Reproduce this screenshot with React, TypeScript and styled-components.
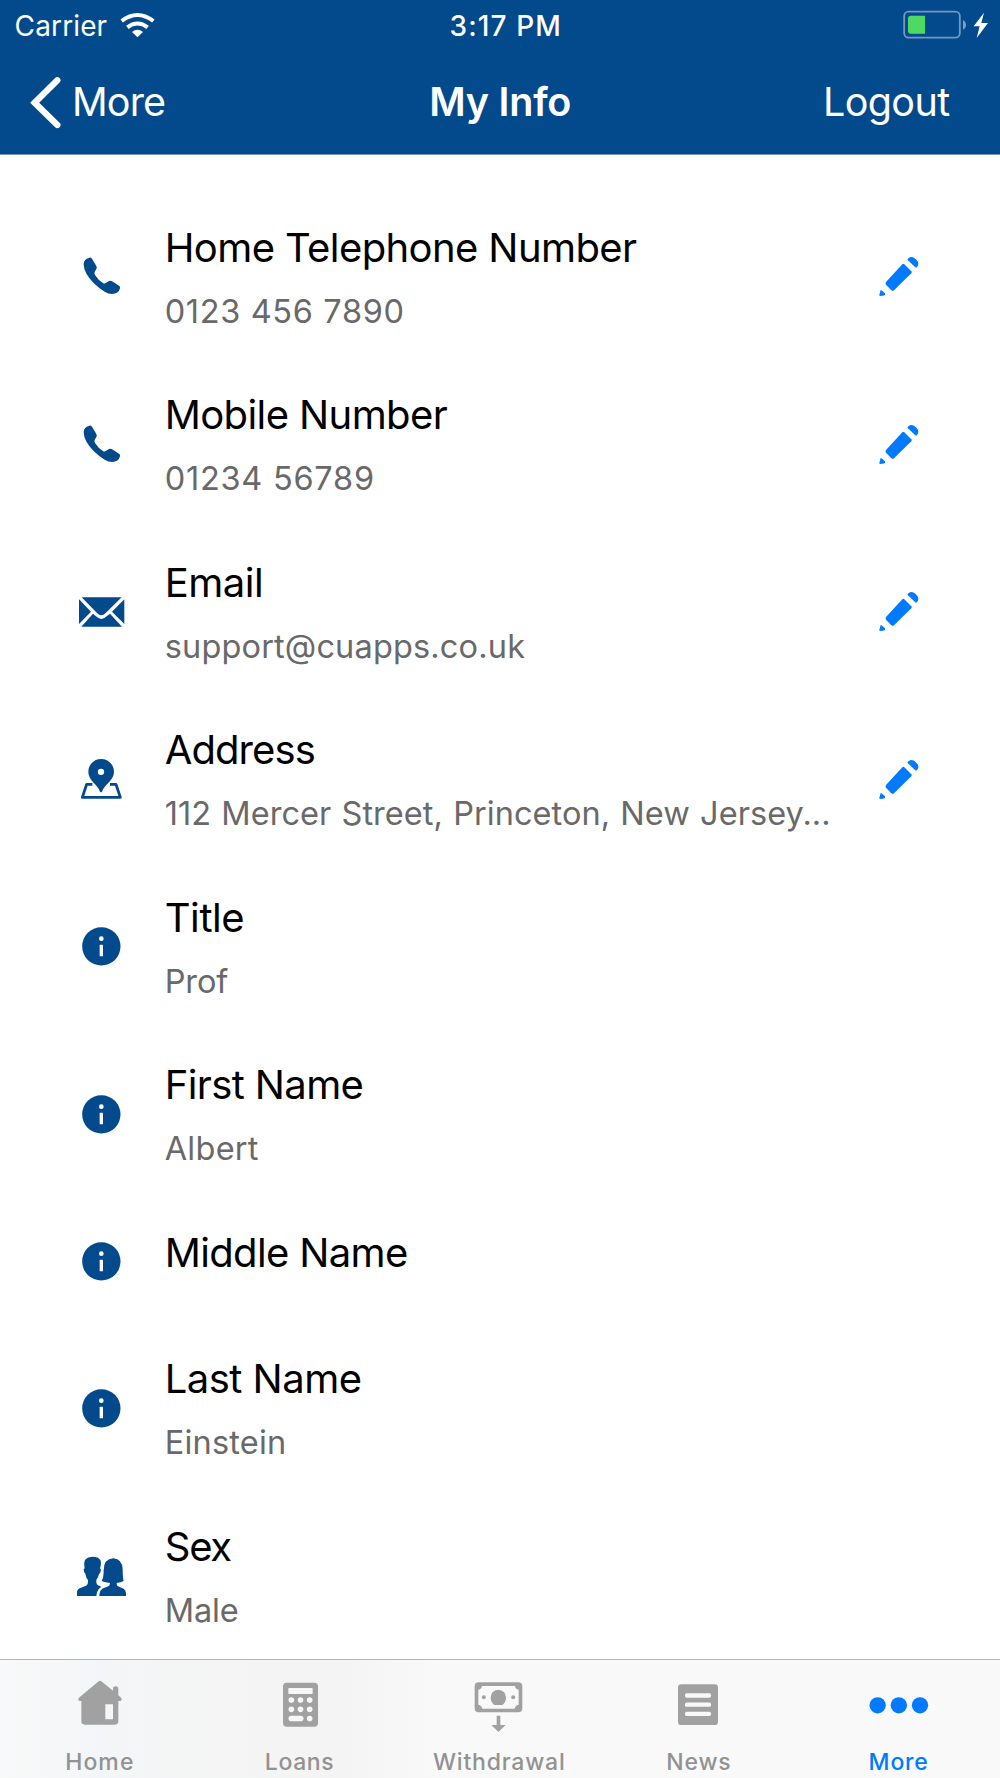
import React from 'react';
import styled, { createGlobalStyle } from 'styled-components';

const NAVY = '#034a8c';
const BLUE = '#007aff';
const GREY = '#a1a1a1';

const GlobalStyle = createGlobalStyle`
  * { box-sizing: border-box; }
  body { margin: 0; background: #fff; }
`;

const Screen = styled.div`
  width: 1000px;
  height: 1778px;
  display: flex;
  flex-direction: column;
  overflow: hidden;
  background: #fff;
  color: #000;
  font-family: Inter, "Liberation Sans", sans-serif;
`;

const Header = styled.header`
  flex: none;
  height: 155px;
  background: ${NAVY};
  border-bottom: 1px solid #7897bc;
  color: #fff;
`;

const StatusBar = styled.div`
  display: grid;
  grid-template-columns: 1fr auto 1fr;
  align-items: center;
  height: 51px;
  padding: 0 10px 0 14.6px;
  font-size: 28px;
  line-height: 42px;
`;

const Side = styled.div<{ $end?: boolean; $gap?: number }>`
  display: flex;
  align-items: center;
  justify-content: ${(p) => (p.$end ? 'flex-end' : 'flex-start')};
  gap: ${(p) => p.$gap ?? 0}px;
`;

const Label = styled.span<{ $tracking?: number }>`
  letter-spacing: ${(p) => p.$tracking ?? 0}px;
  white-space: nowrap;
`;

const Clock = styled.time`
  font-weight: 550;
  letter-spacing: 1.1px;
  padding-top: 1px;
  padding-left: 7px;
`;

const Carrier = styled(Label)`
  padding-top: 1px;
`;

const NavBar = styled.nav`
  display: grid;
  grid-template-columns: 1fr auto 1fr;
  align-items: center;
  height: 103px;
  padding: 0 50.5px 0 28px;
  font-size: 39.5px;
  line-height: 49px;
`;

const NavTitle = styled.h1`
  margin: 0;
  padding-left: 23px;
  font-size: inherit;
  font-weight: 600;
  letter-spacing: -0.25px;
`;

const List = styled.main`
  flex: 1;
  min-height: 0;
  padding-top: 37.5px;
  overflow: hidden;
`;

const Row = styled.section<{ $short: boolean }>`
  display: grid;
  grid-template-columns: 60px 676px 60px;
  align-items: center;
  height: ${(p) => (p.$short ? 126.5 : 167.5)}px;
  padding-left: 71.5px;
  column-gap: 33.2px;
`;

const RowText = styled.div`
  align-self: start;
  padding-top: 31.2px;
  min-width: 0;
`;

const RowTitle = styled.div<{ $tracking: number }>`
  font-size: 40px;
  line-height: 48px;
  letter-spacing: ${(p) => p.$tracking}px;
  white-space: nowrap;
`;

const RowValue = styled.div<{ $tracking: number; $wordGap: number }>`
  margin-top: 20.2px;
  color: #696969;
  font-size: 32.5px;
  line-height: 40px;
  letter-spacing: ${(p) => p.$tracking}px;
  word-spacing: ${(p) => p.$wordGap}px;
  white-space: nowrap;
`;

const EditSlot = styled.button`
  display: flex;
  width: 60px;
  height: 60px;
  margin-left: -4.6px;
  padding: 0;
  border: 0;
  background: none;
`;

const Glyph = styled.svg`
  display: block;
  flex: none;
`;

const TabBar = styled.footer`
  flex: none;
  display: grid;
  grid-template-columns: repeat(5, 1fr);
  height: 119px;
  padding-right: 1.5px;
  border-top: 1px solid #b5b5b6;
  background: linear-gradient(90deg, #f8f9f9 0, #f3f6f8 100px, #f4f5f5 180px, #f4f4f4 340px, #f9f9f9 440px);
`;

const Tab = styled.div<{ $active?: boolean; $tracking: number }>`
  display: flex;
  flex-direction: column;
  align-items: center;
  padding-top: 10px;
  color: ${(p) => (p.$active ? BLUE : '#929292')};
  font-size: 23px;
  font-weight: 500;
  line-height: 28px;
  letter-spacing: ${(p) => p.$tracking}px;
`;

const TabLabel = styled.span`
  margin-top: 14px;
`;

function PhoneIcon() {
  return (
    <Glyph width="60" height="60" viewBox="36 108 180 180" fill={NAVY}>
      <path d="M88 143Q93 141 96 146L109 168Q112 173 109 177L104 186Q102 190 105 195Q114 210 130 220Q133 222 137 219L147 213Q151 211 155 213L177 227Q182 230 180 235Q176 252 156 252Q136 252 104 222Q71 190 71 163Q71 147 88 143Z" />
    </Glyph>
  );
}

function MailIcon() {
  return (
    <Glyph width="60" height="60" viewBox="36 63 180 180" fill={NAVY}>
      <path d="M65 112H185L137 159Q124 173 111 159Z" />
      <path d="M57 118L93 155L57 192Z" />
      <path d="M193 118L156 155L193 192Z" />
      <path d="M64 200L99 161L108 169Q124 185 140 169L150 161L186 200Z" />
    </Glyph>
  );
}

function PinIcon() {
  return (
    <Glyph width="60" height="60" viewBox="36 565 180 180" fill={NAVY}>
      <path fillRule="evenodd" d="M123 595C145 595 162 612 162 633C162 656 141 667 130 684L126 693Q123 697 120 693L116 684C105 667 85 656 85 633C85 612 102 595 123 595ZM123 624A9.5 9.5 0 1 0 123 643A9.5 9.5 0 1 0 123 624Z" />
      <path d="M97 671H80L67 710H181L168 671H150" fill="none" stroke={NAVY} strokeWidth="8.5" strokeLinejoin="round" />
    </Glyph>
  );
}

function InfoIcon() {
  return (
    <Glyph width="60" height="60" viewBox="36 48.5 180 180">
      <circle cx="124" cy="139.5" r="57.5" fill={NAVY} />
      <circle cx="124" cy="116.5" r="7" fill="#fff" />
      <rect x="119" y="135" width="10" height="34" rx="1.5" fill="#fff" />
    </Glyph>
  );
}

function PeopleIcon() {
  return (
    <Glyph width="60" height="60" viewBox="36 75 180 180" fill={NAVY}>
      <path d="M51 228V215Q52 208 59 205L78 197Q84 194 84 187V180Q78 174 76 161Q71 158 71 148Q72 146 74 145Q70 125 77 118Q83 111 97 110Q116 110 121 120Q125 128 120 145Q124 147 122 154Q121 160 117 162Q115 173 109 180V187Q109 193 114 196L124 200Q113 207 111 217L109 228Z" />
      <path d="M118 228Q118 214 124 209Q128 205 145 199Q150 196 150 189Q135 188 125 183Q131 173 131 151Q131 117 160 115Q187 117 188 148Q188 174 191 183Q182 188 170 189Q169 196 174 199L191 206Q197 210 198 220V228Z" />
    </Glyph>
  );
}

function PencilIcon() {
  return (
    <Glyph width="60" height="60" viewBox="26 19 180 180" fill={BLUE}>
      <path d="M142 61Q141 58 145 55Q149 52 154 52Q161 53 168 60Q175 67 174 73Q174 78 170 82Q167 85 164 82Z" />
      <path d="M126 74Q129 71 132 74L153 95Q156 98 153 101L101 152Q97 155 93 152L77 135Q74 131 77 127Z" />
      <path d="M61 151Q64 151 73 160Q75 163 74 166Q73 168 60 169Q56 169 57 165Z" />
    </Glyph>
  );
}

const icons = {
  phone: PhoneIcon,
  mail: MailIcon,
  pin: PinIcon,
  info: InfoIcon,
  people: PeopleIcon,
};

interface Field {
  icon: keyof typeof icons;
  title: string;
  titleTracking: number;
  value?: string;
  valueTracking?: number;
  valueWordGap?: number;
  editable?: boolean;
}

const fields: Field[] = [
  { icon: 'phone', title: 'Home Telephone Number', titleTracking: -0.6, value: '0123 456 7890', valueTracking: 0.65, editable: true },
  { icon: 'phone', title: 'Mobile Number', titleTracking: -0.6, value: '01234 56789', valueTracking: 0.75, editable: true },
  { icon: 'mail', title: 'Email', titleTracking: -0.5, value: 'support@cuapps.co.uk', valueTracking: 0.16, editable: true },
  { icon: 'pin', title: 'Address', titleTracking: -0.9, value: '112 Mercer Street, Princeton, New Jersey...', valueTracking: 0.05, valueWordGap: 1, editable: true },
  { icon: 'info', title: 'Title', titleTracking: -0.4, value: 'Prof', valueTracking: -0.1 },
  { icon: 'info', title: 'First Name', titleTracking: -0.62, value: 'Albert', valueTracking: 0.25 },
  { icon: 'info', title: 'Middle Name', titleTracking: -0.65 },
  { icon: 'info', title: 'Last Name', titleTracking: -0.52, value: 'Einstein', valueTracking: 0.2 },
  { icon: 'people', title: 'Sex', titleTracking: -1.2, value: 'Male', valueTracking: -0.17 },
];

function FieldRow({ field }: { field: Field }) {
  const Icon = icons[field.icon];
  return (
    <Row $short={!field.value}>
      <Icon />
      <RowText>
        <RowTitle $tracking={field.titleTracking}>{field.title}</RowTitle>
        {field.value && (
          <RowValue $tracking={field.valueTracking ?? 0} $wordGap={field.valueWordGap ?? 0}>
            {field.value}
          </RowValue>
        )}
      </RowText>
      {field.editable && (
        <EditSlot>
          <PencilIcon />
        </EditSlot>
      )}
    </Row>
  );
}

export default function App() {
  return (
    <Screen>
      <GlobalStyle />
      <Header>
        <StatusBar>
          <Side $gap={11}>
            <Carrier $tracking={0.13}>Carrier</Carrier>
            <Glyph width="40" height="40" viewBox="355 15 120 120" fill="none" stroke="#fff">
              <path d="M366 60Q413 24 461 60" strokeWidth="12" />
              <path d="M383 79Q413 56 444 79" strokeWidth="12" />
              <path d="M397 93Q413 80 430 93L413.5 109Z" fill="#fff" stroke="none" />
            </Glyph>
          </Side>
          <Clock>3:17 PM</Clock>
          <Side $end>
            <Glyph width="90" height="40" viewBox="360 16 270 120">
              <rect x="372.5" y="33" width="167" height="78" rx="13" fill="none" stroke="#7596bd" strokeWidth="5.5" />
              <path d="M392 45H435V99H392Q384 99 384 91V53Q384 45 392 45Z" fill="#4cd964" />
              <path d="M549 58Q558 63 558 72Q558 82 549 87Z" fill="#7f9fc3" />
              <path d="M612 36L581 77H599L590 112L624 67H604Z" fill="#fff" />
            </Glyph>
          </Side>
        </StatusBar>
        <NavBar>
          <Side $gap={8}>
            <Glyph width="36" height="60" viewBox="84 217 108 180">
              <path d="M172 239L104 306L172 373" fill="none" stroke="#fff" strokeWidth="19" strokeLinecap="round" strokeLinejoin="miter" />
            </Glyph>
            <Label $tracking={-0.87}>More</Label>
          </Side>
          <NavTitle>My Info</NavTitle>
          <Side $end>
            <Label $tracking={-0.6}>Logout</Label>
          </Side>
        </NavBar>
      </Header>

      <List>
        {fields.map((field) => (
          <FieldRow key={field.title} field={field} />
        ))}
      </List>

      <TabBar>
        <Tab $tracking={1.1}>
          <Glyph width="80" height="64" viewBox="180 60 240 192" fill={GREY}>
            <path fillRule="evenodd" d="M296 94Q300 91 304 94L339 122V114Q340 109 347 109Q354 109 355 114V136L364 144Q368 149 362 153H355V214Q355 224 345 224H254Q244 224 244 214V153H238Q232 149 236 144ZM316 163V208H339V163Z" />
          </Glyph>
          <TabLabel>Home</TabLabel>
        </Tab>
        <Tab $tracking={0.6}>
          <Glyph width="80" height="64" viewBox="780 60 240 192" fill={GREY}>
            <rect x="849" y="98" width="105" height="132" rx="11" />
            <g fill="#f7f7f7">
              <rect x="865" y="114" width="73" height="18" rx="2" />
              {[150, 178].map((y) => [874, 901.5, 929].map((x) => <circle key={`${x}-${y}`} cx={x} cy={y} r="8.5" />))}
              <rect x="865.5" y="197" width="45" height="17" rx="8.5" />
              <circle cx="929" cy="205.5" r="8.5" />
            </g>
          </Glyph>
          <TabLabel>Loans</TabLabel>
        </Tab>
        <Tab $tracking={0.8}>
          <Glyph width="80" height="64" viewBox="117 60 240 192" fill={GREY}>
            <path fillRule="evenodd" d="M176 97H295Q307 97 307 109V175Q307 187 295 187H176Q164 187 164 175V109Q164 97 176 97ZM186 108Q185 118 175 119V164Q185 165 187 176H284Q286 165 296 164V119Q286 118 285 108Z" />
            <path d="M223 165Q212 156 212 143Q213 120 235 119Q257 120 258 143Q258 156 247 165Z" />
            <circle cx="191.5" cy="142" r="6" />
            <circle cx="279.5" cy="142" r="6" />
            <path d="M230 197H241V225H257L235.5 246L214 225H230Z" />
          </Glyph>
          <TabLabel>Withdrawal</TabLabel>
        </Tab>
        <Tab $tracking={0.8}>
          <Glyph width="80" height="64" viewBox="717 60 240 192" fill={GREY}>
            <rect x="774" y="103" width="120" height="122" rx="10" />
            {[130, 157.5, 185].map((y) => (
              <rect key={y} x="795" y={y} width="78" height="13" rx="5" fill="#f9f9f9" />
            ))}
          </Glyph>
          <TabLabel>News</TabLabel>
        </Tab>
        <Tab $active $tracking={0.8}>
          <Glyph width="80" height="64" viewBox="117 60 240 192" fill={BLUE}>
            {[173, 236.5, 300].map((x) => (
              <circle key={x} cx={x} cy="166" r="24.5" />
            ))}
          </Glyph>
          <TabLabel>More</TabLabel>
        </Tab>
      </TabBar>
    </Screen>
  );
}
